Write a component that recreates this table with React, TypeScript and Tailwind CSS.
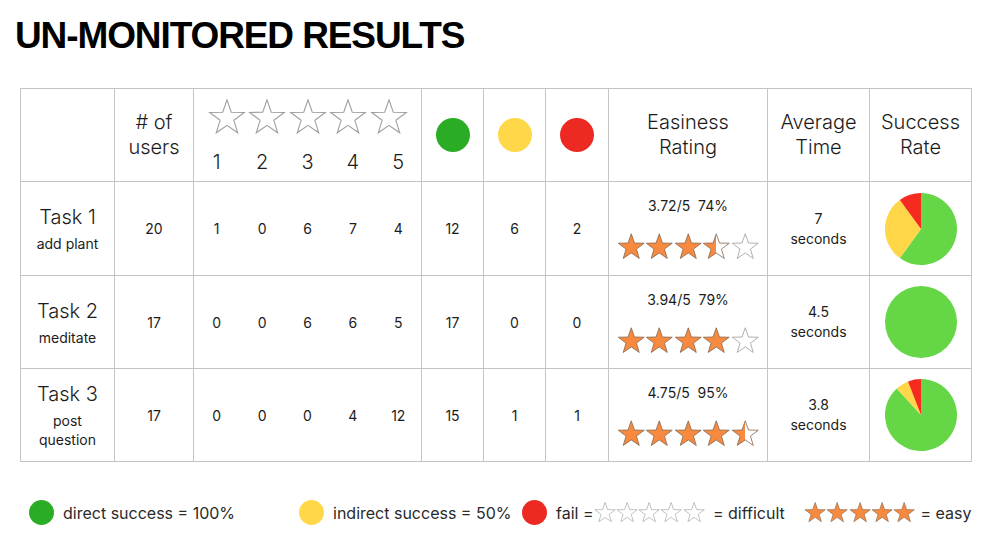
const STAR =
  "M12 1 L14.7 8.78 L22.94 8.95 L16.37 13.92 L18.76 21.8 L12 17.1 L5.24 21.8 L7.63 13.92 L1.06 8.95 L9.3 8.78 Z";

function Star({
  size,
  fill = 0,
  id,
  h,
}: {
  size: number;
  fill?: number;
  id: string;
  h?: number;
}) {
  return (
    <svg width={size} height={h ?? size} viewBox="0 0 24 23" className="block shrink-0">
      <defs>
        <linearGradient id={id} x1="0" x2="1" y1="0" y2="0">
          <stop offset={fill} stopColor="#f78a3e" />
          <stop offset={fill} stopColor="#ffffff" />
        </linearGradient>
      </defs>
      <path
        d={STAR}
        fill={fill > 0 ? `url(#${id})` : "#ffffff"}
        stroke={fill > 0 ? "#8a6a55" : "#a0a0a0"}
        strokeWidth={0.7}
        strokeLinejoin="miter"
      />
    </svg>
  );
}

function StarRow({ rating, size, prefix }: { rating: number; size: number; prefix: string }) {
  return (
    <div className="flex">
      {[0, 1, 2, 3, 4].map((i) => (
        <Star
          key={i}
          id={`${prefix}-${i}`}
          size={size}
          fill={Math.max(0, Math.min(1, rating - i))}
        />
      ))}
    </div>
  );
}

function Pie({ values, id }: { values: number[]; id: string }) {
  const colors = ["#65d646", "#fed647", "#f62b20"];
  const total = values.reduce((a, b) => a + b, 0);
  const r = 36;
  let a0 = 0;
  const paths = values.map((v, i) => {
    if (v === 0) return null;
    if (v === total) return <circle key={i} cx={36} cy={36} r={r} fill={colors[i]} />;
    const a1 = a0 + (v / total) * Math.PI * 2;
    const x0 = 36 + r * Math.sin(a0);
    const y0 = 36 - r * Math.cos(a0);
    const x1 = 36 + r * Math.sin(a1);
    const y1 = 36 - r * Math.cos(a1);
    const large = a1 - a0 > Math.PI ? 1 : 0;
    a0 = a1;
    return (
      <path
        key={i}
        d={`M36 36 L${x0} ${y0} A${r} ${r} 0 ${large} 1 ${x1} ${y1} Z`}
        fill={colors[i]}
      />
    );
  });
  return (
    <svg width={72} height={72} viewBox="0 0 72 72" id={id}>
      {paths}
    </svg>
  );
}

const tasks = [
  { name: "Task 1", sub: ["add plant"], users: 20, votes: [1, 0, 6, 7, 4], g: 12, y: 6, r: 2, score: "3.72/5", pct: "74%", stars: 3.5, time: "7" },
  { name: "Task 2", sub: ["meditate"], users: 17, votes: [0, 0, 6, 6, 5], g: 17, y: 0, r: 0, score: "3.94/5", pct: "79%", stars: 4, time: "4.5" },
  { name: "Task 3", sub: ["post", "question"], users: 17, votes: [0, 0, 0, 4, 12], g: 15, y: 1, r: 1, score: "4.75/5", pct: "95%", stars: 4.5, time: "3.8" },
];

const cell = "border-r border-b border-[#c4c4c4] flex flex-col items-center justify-center text-center";

export default function App() {
  return (
    <div
      className="w-[988px] h-[550px] bg-white text-[#1c1c1c] overflow-hidden"
      style={{ fontFamily: "Inter, 'Noto Sans', sans-serif" }}
    >
      <h1
        className="pl-[15px] pt-[17px] text-[37px] leading-[37px] font-bold text-black tracking-[-1.1px]"
        style={{ fontFamily: "'Liberation Sans', Arial, sans-serif" }}
      >
        UN-MONITORED RESULTS
      </h1>

      <div className="ml-[20px] mt-[34px] w-[952px] border-l border-t border-[#c4c4c4] grid grid-cols-[94px_79px_228px_62px_62px_63px_159px_102px_102px] grid-rows-[93px_94px_93px_93px]">
        {/* header */}
        <div className={cell} />
        <div className={`${cell} text-[20px] leading-[25px] font-light`}>
          <span># of</span>
          <span>users</span>
        </div>
        <div className="border-r border-b border-[#c4c4c4] flex flex-col pt-[9px]">
          <div className="flex justify-center gap-[2.5px]">
            {[0, 1, 2, 3, 4].map((i) => (
              <Star key={i} id={`h-${i}`} size={38} h={37} />
            ))}
          </div>
          <div className="grid grid-cols-5 mt-[15px] text-[20px] leading-[24px] font-light text-center">
            {[1, 2, 3, 4, 5].map((n) => (
              <span key={n}>{n}</span>
            ))}
          </div>
        </div>
        <div className={cell}>
          <div className="w-[34px] h-[34px] rounded-full bg-[#2aad24]" />
        </div>
        <div className={cell}>
          <div className="w-[34px] h-[34px] rounded-full bg-[#ffd84a]" />
        </div>
        <div className={cell}>
          <div className="w-[34px] h-[34px] rounded-full bg-[#ec2a22]" />
        </div>
        <div className={`${cell} text-[20px] leading-[25px] font-light`}>
          <span>Easiness</span>
          <span>Rating</span>
        </div>
        <div className={`${cell} text-[20px] leading-[25px] font-light`}>
          <span>Average</span>
          <span>Time</span>
        </div>
        <div className={`${cell} text-[20px] leading-[25px] font-light`}>
          <span>Success</span>
          <span>Rate</span>
        </div>

        {tasks.map((t, ti) => (
          <div key={t.name} className="contents">
            <div className={cell}>
              <span className="text-[20px] leading-[27px] font-light">{t.name}</span>
              <div className="mt-[3px] text-[14px] leading-[19px]">
                {t.sub.map((s) => (
                  <div key={s}>{s}</div>
                ))}
              </div>
            </div>
            <div className={`${cell} text-[14px]`}>{t.users}</div>
            <div className="border-r border-b border-[#c4c4c4] grid grid-cols-5 items-center text-center text-[14px]">
              {t.votes.map((v, i) => (
                <span key={i}>{v}</span>
              ))}
            </div>
            <div className={`${cell} text-[14px]`}>{t.g}</div>
            <div className={`${cell} text-[14px]`}>{t.y}</div>
            <div className={`${cell} text-[14px]`}>{t.r}</div>
            <div className={cell}>
              <span className="text-[14px] leading-[20px] whitespace-pre">
                {t.score}  {t.pct}
              </span>
              <div className="mt-[16px]">
                <StarRow rating={t.stars} size={28.5} prefix={`r${ti}`} />
              </div>
            </div>
            <div className={`${cell} text-[14px] leading-[20px]`}>
              <span>{t.time}</span>
              <span>seconds</span>
            </div>
            <div className={cell}>
              <Pie values={[t.g, t.y, t.r]} id={`pie-${ti}`} />
            </div>
          </div>
        ))}
      </div>

      <div className="mt-[38px] flex items-center h-[25px] text-[16px] text-[#2a2a2a] whitespace-nowrap">
        <div className="ml-[29px] w-[270px] flex items-center">
          <div className="w-[25px] h-[25px] rounded-full bg-[#2aad24]" />
          <span className="ml-[9px]">direct success = 100%</span>
        </div>
        <div className="w-[223px] flex items-center">
          <div className="w-[25px] h-[25px] rounded-full bg-[#ffd84a]" />
          <span className="ml-[9px]">indirect success = 50%</span>
        </div>
        <div className="flex items-center">
          <div className="w-[25px] h-[25px] rounded-full bg-[#ec2a22]" />
          <span className="ml-[9px]">fail =</span>
          <div className="flex">
            {[0, 1, 2, 3, 4].map((i) => (
              <Star key={i} id={`ld-${i}`} size={22.3} />
            ))}
          </div>
          <span className="ml-[8px] w-[91px]">= difficult</span>
          <div className="flex">
            {[0, 1, 2, 3, 4].map((i) => (
              <Star key={i} id={`le-${i}`} size={22.3} fill={1} />
            ))}
          </div>
          <span className="ml-[5px]">= easy</span>
        </div>
      </div>
    </div>
  );
}
